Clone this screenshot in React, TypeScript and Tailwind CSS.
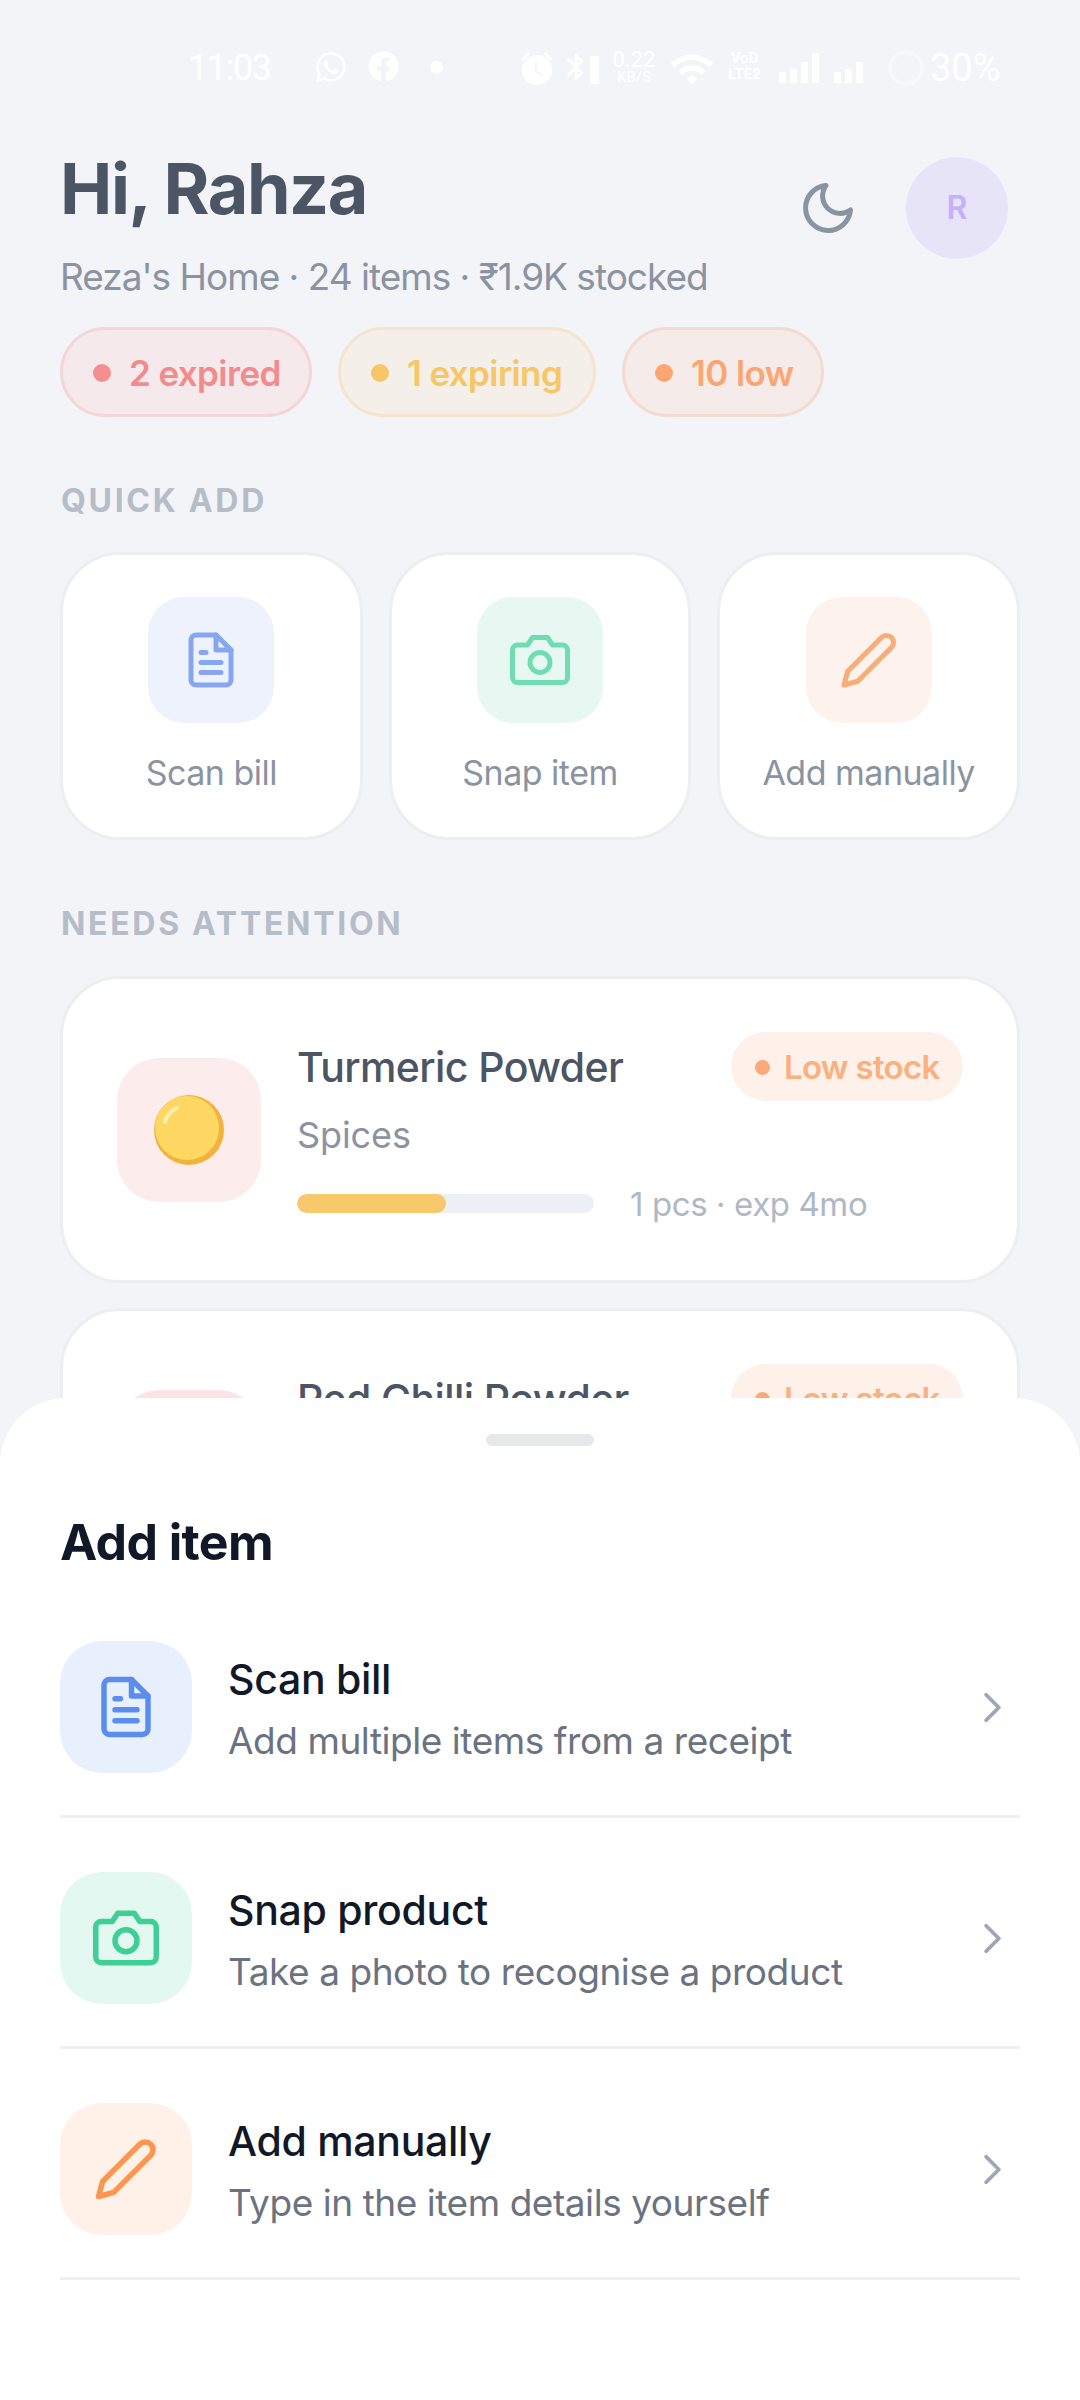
import { FaFacebook, FaWhatsapp } from 'react-icons/fa';
import { FiCamera, FiChevronRight, FiEdit2, FiFileText, FiMoon } from 'react-icons/fi';
import { MdBluetooth, MdWifi } from 'react-icons/md';

const QUICK = [
  { label: 'Scan bill', tile: 'bg-[#eef2fd]', icon: <FiFileText size={60} className="text-[#86a7f0]" /> },
  { label: 'Snap item', tile: 'bg-[#e7f8f2]', icon: <FiCamera size={60} className="text-[#6fdcb2]" /> },
  { label: 'Add manually', tile: 'bg-[#fdf2ec]', icon: <FiEdit2 size={60} className="text-[#fbab75]" /> },
];

const SHEET_ROWS = [
  { title: 'Scan bill', sub: 'Add multiple items from a receipt', tile: 'bg-[#e8f0fe]', icon: <FiFileText size={66} className="text-[#5b8def]" /> },
  { title: 'Snap product', sub: 'Take a photo to recognise a product', tile: 'bg-[#e3f8f0]', icon: <FiCamera size={66} className="text-[#3ecf96]" /> },
  { title: 'Add manually', sub: 'Type in the item details yourself', tile: 'bg-[#fff0e8]', icon: <FiEdit2 size={66} className="text-[#fb9550]" /> },
];

function StatusBar() {
  return (
    <div className="flex h-[146px] items-start pl-[188px] pt-[50px] text-white">
      <span className="w-[126px] text-[36px] leading-[36px] tracking-[-1.4px] font-['Roboto',sans-serif]">11:03</span>
      <FaWhatsapp size={34} />
      <FaFacebook size={31} className="ml-[20px] mt-[1px]" />
      <span className="ml-[31px] mt-[11px] h-[13px] w-[13px] rounded-full bg-white" />
      {/* alarm clock, filled in the status bar */}
      <svg width="38" height="36" viewBox="0 0 38 36" className="ml-[75px]" fill="white">
        <circle cx="19" cy="20" r="15" />
        <path d="M3 9l7-7 2 2-7 7zM35 9l-7-7-2 2 7 7z" />
        <path d="M18 12v9l6 4" fill="none" stroke="#f3f4f8" strokeWidth="2" />
      </svg>
      <MdBluetooth size={32} className="ml-[4px] mt-[1px]" />
      <span className="-ml-[2px] mt-[6px] h-[28px] w-[9px] rounded-[2px] bg-white" />
      <div className="ml-[11px] flex w-[48px] flex-col items-center font-['Roboto',sans-serif]">
        <span className="text-[22px] leading-[20px]">0.22</span>
        <span className="text-[15px] leading-[15px]">KB/S</span>
      </div>
      <MdWifi size={46} className="ml-[11px] -mt-[4px]" />
      <div className="ml-[12px] flex w-[35px] flex-col items-center font-['Roboto',sans-serif] text-[15px] font-bold leading-[16px]">
        <span>VoD</span>
        <span>LTE2</span>
      </div>
      <div className="ml-[17px] mt-[3px] flex h-[30px] items-end gap-[4px]">
        <span className="h-[11px] w-[7px] bg-white" />
        <span className="h-[14px] w-[7px] bg-white" />
        <span className="h-[21px] w-[7px] bg-white" />
        <span className="h-[30px] w-[7px] bg-white" />
      </div>
      <div className="ml-[15px] mt-[3px] flex h-[30px] items-end gap-[4px]">
        <span className="h-[11px] w-[7px] bg-white" />
        <span className="h-[14px] w-[7px] bg-white" />
        <span className="h-[21px] w-[7px] bg-white" />
      </div>
      <span className="ml-[25px] h-[36px] w-[36px] rounded-full border-[4px] border-[#f7f8fa]" />
      <span className="ml-[6px] text-[38px] leading-[36px] font-['Roboto',sans-serif]">30%</span>
    </div>
  );
}

function ItemCard({ name, tile }: { name: string; tile: string }) {
  return (
    <div className="flex h-[307px] items-center gap-[36px] rounded-[60px] border-[3px] border-[#eceef2] bg-white px-[54px]">
      <div className={`flex h-[144px] w-[144px] shrink-0 items-center justify-center rounded-[42px] ${tile}`}>
        <svg width="72" height="72" viewBox="0 0 72 72">
          <circle cx="36" cy="36" r="35" fill="#f2b33c" />
          <circle cx="34" cy="34" r="32" fill="#ffd863" />
          <path d="M12 28a22 22 0 0 1 12-14" fill="none" stroke="#ffeeb0" strokeWidth="4" strokeLinecap="round" />
        </svg>
      </div>
      <div className="min-w-0 flex-1">
        <div className="flex h-[69px] items-center justify-between">
          <span className="pt-[2px] text-[41px] font-medium tracking-[-0.6px] text-[#4b5563]">{name}</span>
          <span className="flex h-[69px] w-[232px] items-center gap-[14px] rounded-full bg-[#fdf1ea] pl-[24px] pt-[2px] text-[33px] font-semibold tracking-[-0.7px] text-[#fbb07f]">
            <span className="h-[15px] w-[15px] rounded-full bg-[#fba97a]" />
            Low stock
          </span>
        </div>
        <div className="mt-[10px] text-[36px] leading-[48px] tracking-[-0.1px] text-[#8b93a1]">Spices</div>
        <div className="mt-[20px] flex h-[48px] items-center gap-[36px]">
          <div className="h-[19px] w-[297px] overflow-hidden rounded-full bg-[#eef0f8]">
            <div className="h-full w-[149px] rounded-full bg-[#f8c96a]" />
          </div>
          <span className="pt-[3px] text-[33px] tracking-[-0.4px] text-[#b0b8c4]">1 pcs · exp 4mo</span>
        </div>
      </div>
    </div>
  );
}

export default function App() {
  return (
    <div className="relative h-[2400px] w-[1080px] overflow-hidden bg-[#f3f4f8] font-['Inter',sans-serif]">
      <StatusBar />

      <div className="px-[60px]">
        {/* Greeting */}
        <div className="flex items-start justify-between">
          <div>
            <h1 className="text-[70px] font-bold leading-[86px] tracking-[-1.4px] text-[#4b5563]">Hi, Rahza</h1>
            <p className="mt-[21px] text-[37px] leading-[48px] tracking-[-1px] text-[#8b93a1]">
              Reza's Home · 24 items · ₹1.9K stocked
            </p>
          </div>
          <div className="mr-[12px] mt-[11px] flex items-center gap-[48px]">
            <FiMoon size={60} className="text-[#8a93a0]" />
            <div className="flex h-[102px] w-[102px] items-center justify-center rounded-full bg-[#e8e4f8] text-[32px] font-semibold text-[#c4b0fc]">
              R
            </div>
          </div>
        </div>

        {/* Status chips */}
        <div className="mt-[26px] flex gap-[26px]">
          <span className="flex h-[90px] w-[252px] items-center gap-[18px] rounded-full border-[3px] border-[#f3d6d8] bg-[#f5e9ec] pl-[30px] pt-[2px] text-[35px] font-semibold tracking-[-0.6px] text-[#f28b8b]">
            <span className="h-[18px] w-[18px] rounded-full bg-[#f58e8e]" />
            2 expired
          </span>
          <span className="flex h-[90px] w-[258px] items-center gap-[18px] rounded-full border-[3px] border-[#f4e5cc] bg-[#f4efe9] pl-[30px] pt-[2px] text-[35px] font-semibold tracking-[-0.6px] text-[#f6c667]">
            <span className="h-[18px] w-[18px] rounded-full bg-[#f6c667]" />
            1 expiring
          </span>
          <span className="flex h-[90px] w-[202px] items-center gap-[18px] rounded-full border-[3px] border-[#f4dbd0] bg-[#f5ebe9] pl-[30px] pt-[2px] text-[35px] font-semibold tracking-[-0.6px] text-[#fba672]">
            <span className="h-[18px] w-[18px] rounded-full bg-[#fba672]" />
            10 low
          </span>
        </div>

        {/* Quick add */}
        <div className="ml-[1px] mt-[64px] text-[32px] font-bold leading-[40px] tracking-[2.7px] text-[#b4bdc8]">QUICK ADD</div>
        <div className="mt-[31px] grid grid-cols-3 gap-[26px]">
          {QUICK.map((q) => (
            <div key={q.label} className="flex h-[288px] flex-col items-center rounded-[60px] border-[3px] border-[#eceef2] bg-white pt-[42px]">
              <div className={`flex h-[126px] w-[126px] items-center justify-center rounded-[36px] ${q.tile}`}>{q.icon}</div>
              <span className="mt-[26px] text-[34px] leading-[48px] tracking-[-0.5px] text-[#8b93a1]">{q.label}</span>
            </div>
          ))}
        </div>

        {/* Needs attention */}
        <div className="ml-[1px] mt-[64px] text-[32px] font-bold leading-[40px] tracking-[2.7px] text-[#b4bdc8]">NEEDS ATTENTION</div>
        <div className="mt-[32px] flex flex-col gap-[25px]">
          <ItemCard name="Turmeric Powder" tile="bg-[#fcecec]" />
          <ItemCard name="Red Chilli Powder" tile="bg-[#fce4e6]" />
        </div>
      </div>

      {/* Add item sheet */}
      <div className="absolute inset-x-0 bottom-0 top-[1398px] rounded-t-[66px] bg-white px-[60px]">
        <div className="mx-auto mt-[36px] h-[12px] w-[108px] rounded-full bg-[#e7e8ec]" />
        <h2 className="mt-[64px] text-[50px] font-bold leading-[64px] tracking-[-0.6px] text-[#111827]">Add item</h2>
        <div className="mt-[25px]">
          {SHEET_ROWS.map((r) => (
            <div key={r.title} className="mb-[12px] flex items-center gap-[36px] border-b-[3px] border-[#eeeff1] py-[42px]">
              <div className={`flex h-[132px] w-[132px] shrink-0 items-center justify-center rounded-[42px] ${r.tile}`}>{r.icon}</div>
              <div className="flex-1 pt-[4px]">
                <div className="text-[41px] font-medium leading-[56px] tracking-[-0.3px] text-[#111827]">{r.title}</div>
                <div className="mt-[8px] text-[37px] leading-[52px] tracking-[-0.45px] text-[#6b7280]">{r.sub}</div>
              </div>
              <FiChevronRight size={51} strokeWidth={1.8} className="mr-[2px] text-[#9ca6b4]" />
            </div>
          ))}
        </div>
      </div>
    </div>
  );
}
